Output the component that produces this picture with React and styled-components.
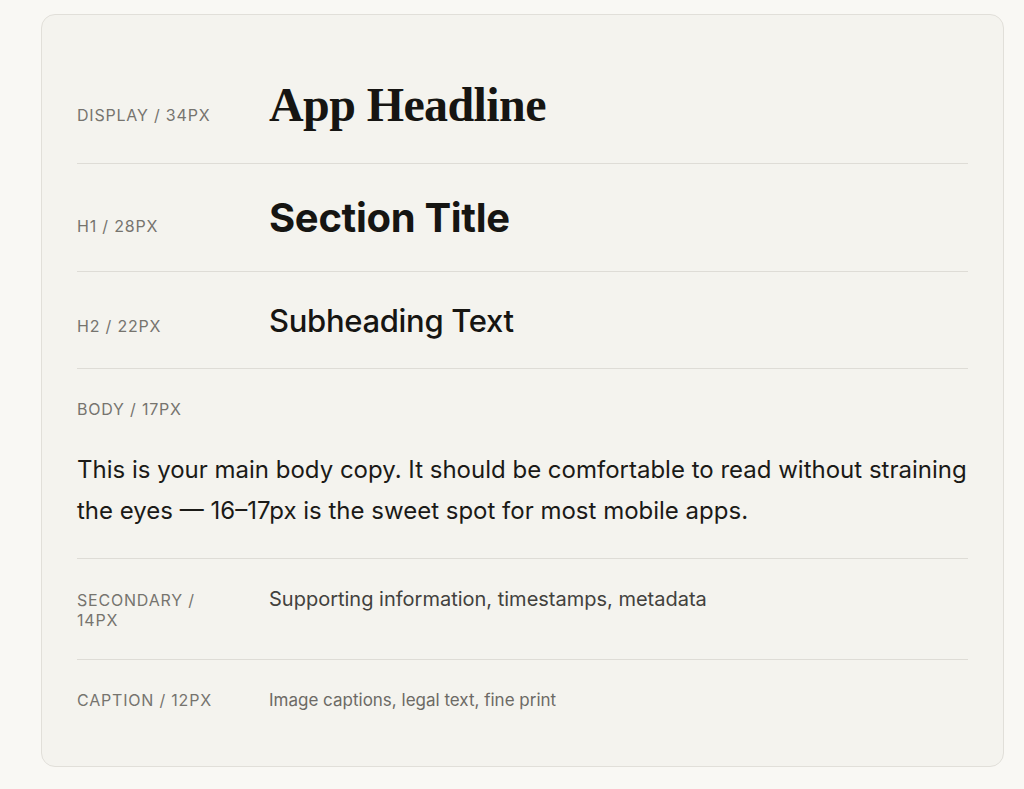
import React from "react";
import styled, { createGlobalStyle } from "styled-components";

const GlobalStyle = createGlobalStyle`
    html, body {
        margin: 0;
        padding: 0;
        background: #f9f8f4;
    }
    body {
        font-family: Inter, "Noto Sans", sans-serif;
        -webkit-font-smoothing: antialiased;
    }
`;

const Page = styled.div`
    padding: 14px 20px 23px 41px;
`;

const Card = styled.div`
    width: 963px;
    box-sizing: border-box;
    background: #f4f3ee;
    border: 1px solid #e1dfd9;
    border-radius: 14px;
    padding: 31px 35px 27px;
`;

const Row = styled.div`
    display: grid;
    grid-template-columns: 150px 1fr;
    column-gap: 42px;
    align-items: baseline;
    padding: 30px 0 29px;
    border-bottom: 1px solid #dedcd6;

    &:last-child {
        border-bottom: none;
    }
`;

const StackRow = styled.div`
    display: flex;
    flex-direction: column;
    gap: 30px;
    padding: 30px 0 27px;
    border-bottom: 1px solid #dedcd6;
`;

const Label = styled.div`
    font-family: Inter, sans-serif;
    font-size: 16px;
    line-height: 20px;
    font-weight: 400;
    letter-spacing: 0.05em;
    text-transform: uppercase;
    color: #76746e;
`;

const Display = styled.div`
    font-family: "Liberation Serif", "DejaVu Serif", serif;
    font-weight: 700;
    font-size: 48px;
    line-height: 58px;
    letter-spacing: -0.6px;
    color: #161512;
`;

const Heading = styled.div`
    font-family: Inter, sans-serif;
    font-size: ${({ size }) => size}px;
    font-weight: ${({ weight }) => weight};
    line-height: 1.2;
    letter-spacing: ${({ tracking }) => tracking};
    color: #161512;
`;

const Body = styled.p`
    margin: 0;
    font-family: Inter, sans-serif;
    font-size: 24px;
    line-height: 41px;
    color: #1b1a17;
`;

const Small = styled.div`
    font-family: Inter, sans-serif;
    font-size: ${({ size }) => size}px;
    line-height: 20px;
    color: ${({ tone }) => tone};
    letter-spacing: ${({ tracking }) => tracking};
`;

export default function App() {
    return (
        <Page>
            <GlobalStyle />
            <Card>
                <Row>
                    <Label>Display / 34px</Label>
                    <Display>App Headline</Display>
                </Row>
                <Row>
                    <Label>H1 / 28px</Label>
                    <Heading size={40} weight={700} tracking="-0.008em">
                        Section Title
                    </Heading>
                </Row>
                <Row>
                    <Label>H2 / 22px</Label>
                    <Heading size={31} weight={500} tracking="-0.01em">
                        Subheading Text
                    </Heading>
                </Row>
                <StackRow>
                    <Label>Body / 17px</Label>
                    <Body>
                        This is your main body copy. It should be comfortable to
                        read without straining the eyes — 16–17px is the sweet
                        spot for most mobile apps.
                    </Body>
                </StackRow>
                <Row>
                    <Label>Secondary / 14px</Label>
                    <Small size={20} tone="#42413d" tracking="0">
                        Supporting information, timestamps, metadata
                    </Small>
                </Row>
                <Row>
                    <Label>Caption / 12px</Label>
                    <Small size={17} tone="#6c6a65" tracking="0">
                        Image captions, legal text, fine print
                    </Small>
                </Row>
            </Card>
        </Page>
    );
}
